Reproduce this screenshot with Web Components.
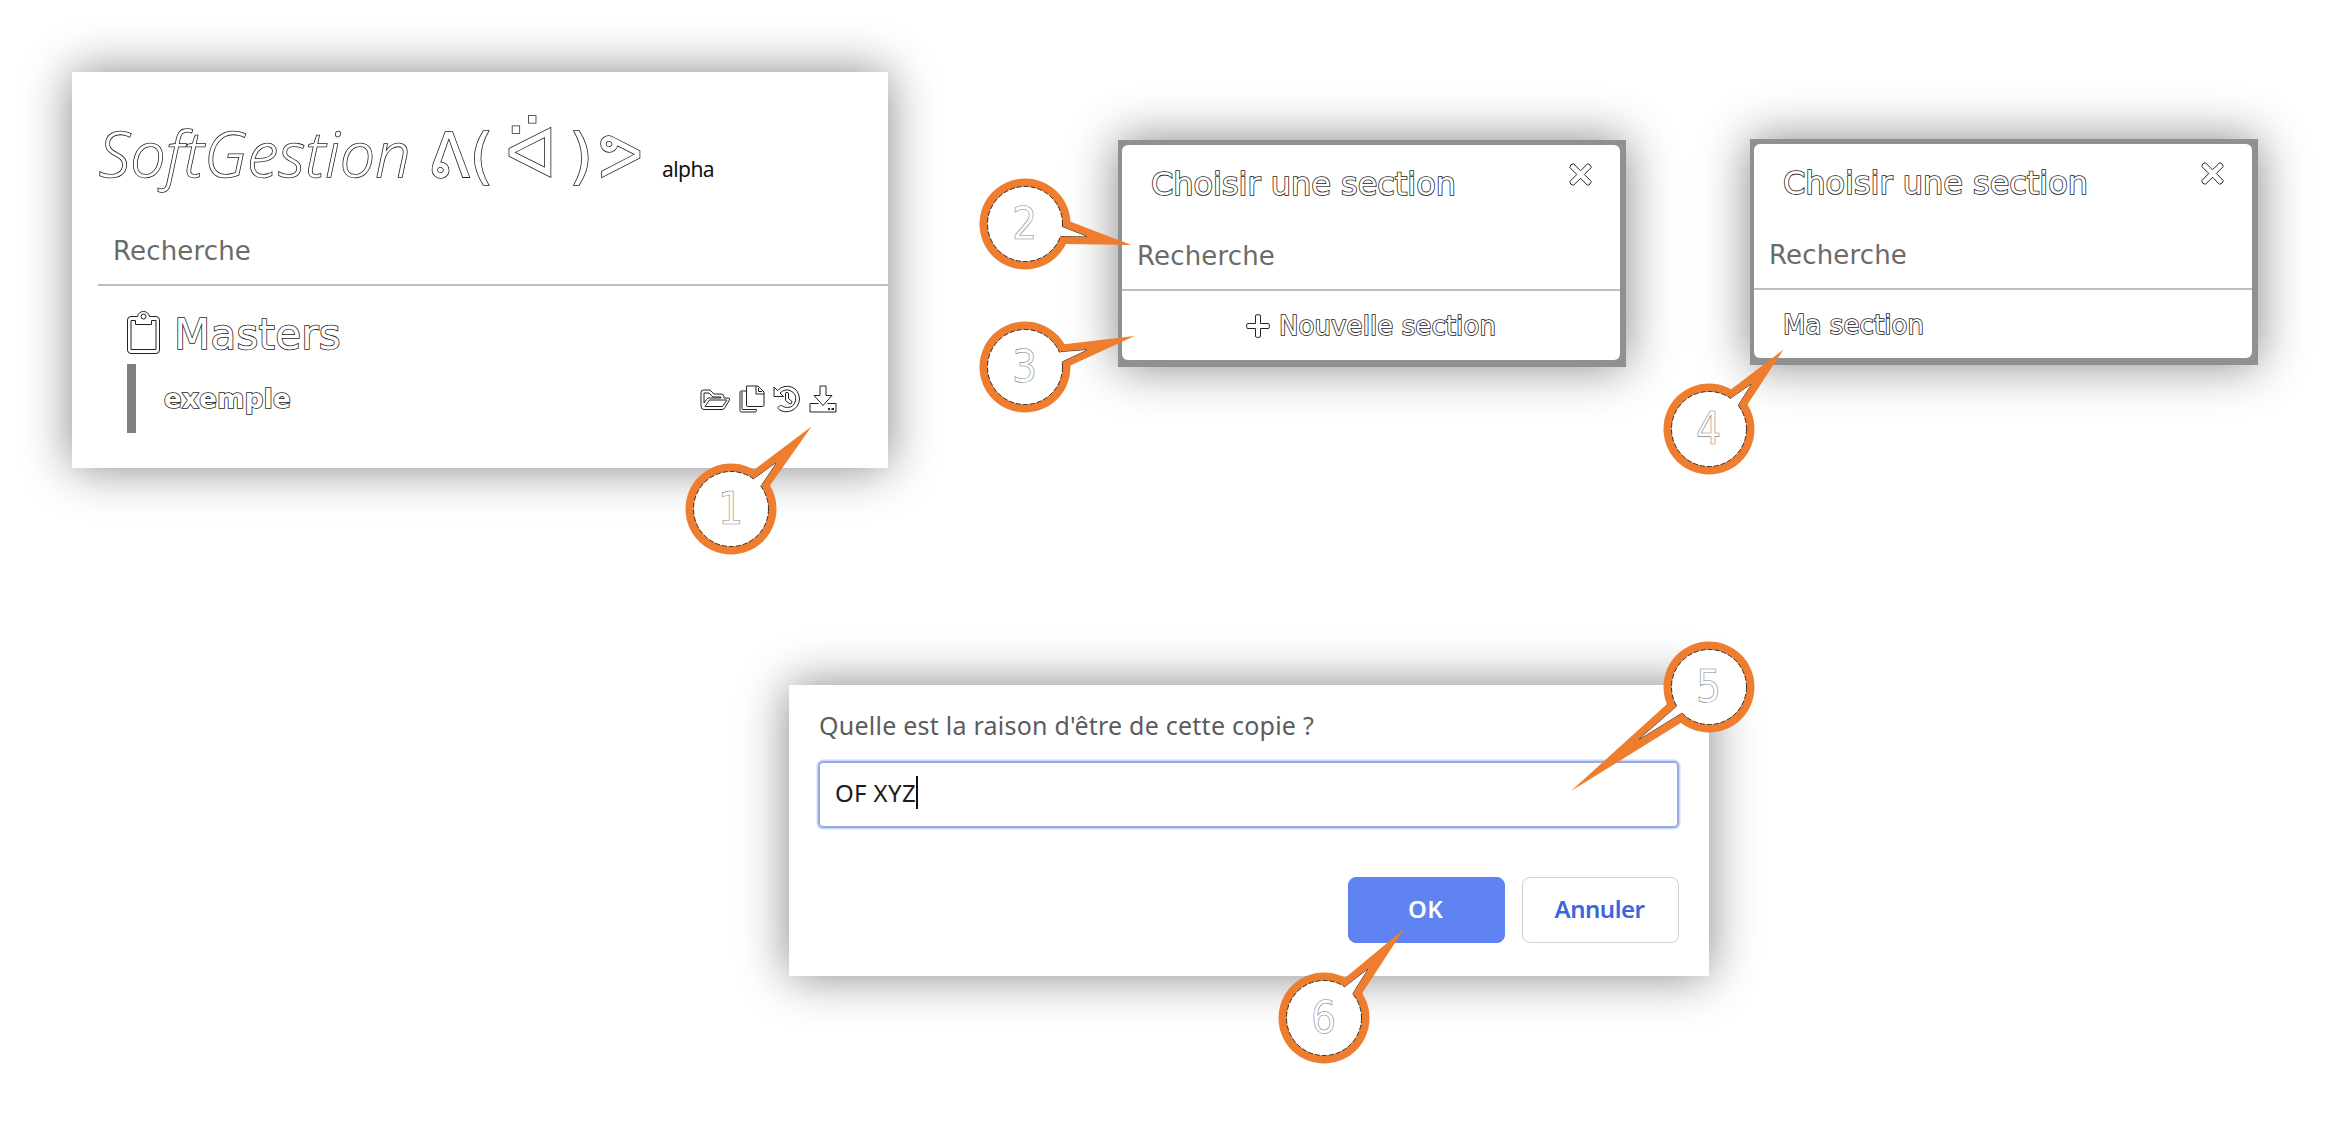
<!DOCTYPE html>
<html lang="fr">
<head>
<meta charset="utf-8">
<title>SoftGestion</title>
<style>
html,body{margin:0;background:#fff}
body{width:2338px;height:1129px;overflow:hidden;font-family:"DejaVu Sans",sans-serif}
</style>
</head>
<body>
<guide-board></guide-board>
<script>
const define=(name,html,setup)=>customElements.define(name,class extends HTMLElement{
  connectedCallback(){
    if(this.shadowRoot)return;
    const root=this.attachShadow({mode:'open'});
    root.innerHTML=typeof html==='function'?html(this):html;
    if(setup)setup(this,root);
  }
});

/* Text whose tracking is adjusted so that it spans the width "w" */
define('fit-text','<style>:host{display:block;white-space:pre;flex:none}:host([outline]){color:#fff;-webkit-text-stroke:1.6px #1c1c1c;paint-order:stroke fill}</style><slot></slot>',el=>{
  const w=parseFloat(el.getAttribute('w'));
  if(!w)return;
  const r=document.createRange();r.selectNodeContents(el);
  const n=[...el.textContent].length;
  el.style.letterSpacing=((w-r.getBoundingClientRect().width)/n)+'px';
  el.style.width=w+'px';
});

const icons={
clipboard:[33,43,'<path d="M4 5.500H10.500C11.500-1.200 21.500-1.200 22.500 5.500H29Q32.500 5.500 32.500 9V39Q32.500 42.500 29 42.500H4Q.5 42.500 .5 39V9Q.5 5.500 4 5.500Z"/><path d="M4 9.500H8.500V13.500H24.500V9.500H29V38.500H4Z"/><circle cx="16.500" cy="5.500" r="2.500"/>'],
folder:[31,24,'<path d="M1 19V5.500Q1 3 3.500 3H10L14 7H21Q24 7 24 9.500V11H28Q30.500 11 29.500 13L25 20.500Q24 22.500 22 22.500H4Q1 22.500 1 19Z"/><path d="M4 16V6H9L13 10H21V11H9Q7.500 11 6.500 12.500ZM5 19.500L9.500 13H27L22.500 19.500Z"/>'],
copy:[26,28,'<path d="M7.500 1H19L25 7V20Q25 21.500 23.500 21.500H8.500Q7.500 21.500 7.500 20Z"/><path d="M17 1V9H25M19.500 3V6.500H23"/><path d="M7 6H2Q1 6 1 7.500V25.500Q1 27 2.500 27H16Q17.500 27 17.500 25.500V24.500H4Q3 24.500 3 23.500V7"/>'],
history:[28,28,'<path d="M1 2V11.500H10.500L7 8Q12 3.500 17 5.500Q24 8.500 22.500 16Q20.500 22.500 14.500 22.500Q11 22.500 8.500 20.500Q7.500 20 6.500 21L5 22.500Q4.500 23.500 6 24.500Q12 28.500 19 25.500Q26 22 26.500 14Q26 5 18.500 2Q10.500-.5 4.500 5.500Z"/><path d="M12.500 8Q14 6.500 15.500 8V13.500L19 16.500Q19 19 17 19L12.500 15.500Z"/>'],
download:[28,28,'<path d="M11 1H17V10.500H23L14 20.500L5 10.500H11Z"/><path d="M9.500 18.500H1V27H27V18.500H18.500"/><path d="M19 24H21M22.500 24H25" stroke-width="2"/>'],
times:[23,23,'<path d="M4.500 .8L11.500 7.800L18.500 .8Q21 .5 22.300 4.500L15.300 11.500L22.300 18.500Q21.500 22 18.500 22.300L11.500 15.300L4.500 22.300Q1 22 .8 18.500L7.800 11.500L.8 4.500Q1 1 4.500 .8Z"/>'],
plus:[24,24,'<path d="M10 .8H14Q14.500 .8 14.500 2V9.500H22Q23.300 9.500 23.300 10.500V13.500Q23.300 14.500 22 14.500H14.500V22Q14.500 23.300 13.500 23.300H10.500Q9.500 23.300 9.500 22V14.500H2Q.7 14.500 .7 13.500V10.500Q.7 9.500 2 9.500H9.500V2Q9.500 .8 10 .8Z"/>']
};
define('line-icon',el=>{
  const [w,h,p]=icons[el.getAttribute('name')];
  return `<style>:host{display:block;flex:none;width:${w}px;height:${h}px}svg{display:block;overflow:visible}</style><svg width="${w}" height="${h}" viewBox="0 0 ${w} ${h}" fill="none" stroke="#222" stroke-width="1" stroke-linejoin="round">${p}</svg>`;
});

define('search-field','<style>:host{display:block;box-sizing:border-box;height:68px;line-height:66px;border-bottom:2px solid #bfbfbf;font-size:26px;color:#6b6b6b}</style><slot></slot>');

define('master-panel',`<style>
:host{display:block;box-sizing:border-box;background:#fff;padding-top:41px;box-shadow:0 0 46px rgba(0,0,0,.48)}
.title{display:flex;align-items:baseline;height:80px;line-height:80px;padding-left:27px}
.name{font:italic 300 62px/80px "Open Sans",sans-serif}
.face{font-size:61px;margin-left:17px;word-spacing:-7px}
.face .head{font-size:67px;line-height:1}
.face .arm{margin-left:6px}
.tag{font:21px/80px "Noto Sans","Open Sans",sans-serif;color:#111;margin-left:19px}
search-field{margin:25px 0 20px 26px;padding-left:15px}
.group{display:flex;align-items:center;height:56px;padding-bottom:2px;margin-left:55px;gap:14px;font-size:42px}
line-icon[name=clipboard]{margin-bottom:4px}
.item{display:flex;align-items:center;box-sizing:border-box;height:69px;margin-left:55px;border-left:9px solid #7f7f7f;padding:0 51px 0 28px;justify-content:space-between;font-size:26px;font-weight:bold}
.tools{display:flex;align-items:center;gap:8px}
</style>
<div class="title"><fit-text class="name" outline w="312">SoftGestion</fit-text><fit-text class="face" outline w="215">ᕕ( <span class="head">ᐛ</span> )<span class="arm">ᕗ</span></fit-text><fit-text class="tag" w="52">alpha</fit-text></div>
<search-field><fit-text w="138">Recherche</fit-text></search-field>
<div class="group"><line-icon name="clipboard"></line-icon><fit-text outline w="167">Masters</fit-text></div>
<div class="item"><fit-text outline w="127">exemple</fit-text><div class="tools"><line-icon name="folder"></line-icon><line-icon name="copy"></line-icon><line-icon name="history"></line-icon><line-icon name="download"></line-icon></div></div>`);

define('section-dialog',`<style>
:host{display:block;box-sizing:border-box;background:#909090;padding:5px 6px 7px 4px;box-shadow:0 0 46px rgba(0,0,0,.48)}
.body{display:flex;flex-direction:column;height:100%;background:#fff;border-radius:6px}
header{display:flex;justify-content:space-between;height:56px;line-height:56px;margin:11px 28px 11px 29px;font-size:32px}
line-icon{margin-top:7px}
search-field{padding-left:15px}
.row{flex:1;display:flex;align-items:center;font-size:26px;padding-top:1px}
</style>
<div class="body"><header><fit-text outline w="305">Choisir une section</fit-text><line-icon name="times"></line-icon></header>
<search-field><fit-text w="138">Recherche</fit-text></search-field>
<div class="row"><slot></slot></div></div>`);

define('prompt-dialog',`<style>
:host{display:block;box-sizing:border-box;background:#fff;padding:20px 30px 0 29px;box-shadow:0 0 46px rgba(0,0,0,.48);font-family:"Noto Sans","Open Sans",sans-serif}
.q{height:41px;line-height:41px;font-size:25px;color:#5c5c5c;padding-left:1px}
.input{display:flex;align-items:center;box-sizing:border-box;height:67px;margin-top:15px;border:2px solid #99a9dd;border-radius:5px;box-shadow:0 0 0 1.500px #c9d9fa;padding-left:15px;font-size:24px;color:#1c1c1c}
.input fit-text{line-height:40px;margin-top:-3px}
.caret{width:2px;height:33px;background:#111;margin-top:-4px}
.actions{display:flex;justify-content:flex-end;gap:17px;margin-top:49px}
.btn{display:flex;align-items:center;justify-content:center;box-sizing:border-box;width:157px;height:66px;border-radius:8px;border:1px solid #cfcfd4;font-weight:600;font-size:24px;color:#3d64df;padding:0 2px 3px 0}
.ok{background:#5f83f1;border-color:#5f83f1;color:#fff}
</style>
<div class="q"><fit-text w="495">Quelle est la raison d'être de cette copie ?</fit-text></div>
<div class="input"><fit-text w="81">OF XYZ</fit-text><div class="caret"></div></div>
<div class="actions"><div class="btn ok"><fit-text w="35">OK</fit-text></div><div class="btn"><fit-text w="90">Annuler</fit-text></div></div>`);

/* Numbered callout; the tail geometry is relative to the disc centre */
define('call-out',el=>{
  const [tip,j1,j2,i1,i2,a]=el.getAttribute('tail').split(' ');
  return `<style>:host{width:92px;height:92px;display:flex;align-items:center;justify-content:center;font:44px/92px "DejaVu Sans Condensed","DejaVu Sans",sans-serif}
svg{position:absolute;inset:0;overflow:visible}
span{position:relative;color:#fff;-webkit-text-stroke:.6px #8a8a8a}</style>
<svg width="92" height="92" viewBox="-46 -46 92 92"><g fill="#ee7d30"><circle r="45.500"/><path d="M0 0L${j1}L${tip}L${j2}Z"/></g>
<circle r="37.500" fill="#fff" stroke="#222" stroke-width=".9" stroke-dasharray="5 2"/><path fill="none" stroke="#222" d="M${i1}L${a}L${i2}"/><path fill="#fff" d="M0 0L${i1}L${a}L${i2}Z"/></svg><span><slot></slot></span>`;
});

define('guide-board',`<style>
:host{display:block;position:relative;width:2338px;height:1129px}
master-panel,section-dialog,prompt-dialog,call-out{position:absolute}
.new{margin:0 auto;display:flex;align-items:center;gap:9px}
.own{margin-left:29px}
</style>
<master-panel style="left:72px;top:72px;width:816px;height:396px"></master-panel>
<section-dialog style="left:1118px;top:140px;width:508px;height:227px"><div class="new"><line-icon name="plus"></line-icon><fit-text outline w="217">Nouvelle section</fit-text></div></section-dialog>
<section-dialog style="left:1750px;top:139px;width:508px;height:226px"><fit-text class="own" outline w="141">Ma section</fit-text></section-dialog>
<prompt-dialog style="left:789px;top:685px;width:920px;height:291px"></prompt-dialog>
<call-out style="left:684.5px;top:463px" tail="80.5,-82.5 23.5,-39.5 39,-23.5 23.5,-30.5 30,-23.5 45,-46">1</call-out>
<call-out style="left:978.5px;top:178px" tail="106.5,21 45,-2.5 40.5,20 37.5,3 36,12 61.5,12.5">2</call-out>
<call-out style="left:978.5px;top:321px" tail="109.5,-31 37,-22.5 45.500,-1.500 36,-15 37,-5.500 61.500,-17">3</call-out>
<call-out style="left:1662.5px;top:383px" tail="74.500,-79.500 22.500,-40 38.500,-24.500 22.500,-31 29,-24 42,-44.500">4</call-out>
<call-out style="left:1662.5px;top:641px" tail="-138,104 -42.500,17.500 -27.500,35.500 -33,20 -27.500,26 -69.500,52">5</call-out>
<call-out style="left:1277.5px;top:972px" tail="80,-89 21.500,-40.500 38,-24.500 21.500,-31.500 28.500,-24.500 43.500,-48.500">6</call-out>`);
</script>
</body>
</html>
